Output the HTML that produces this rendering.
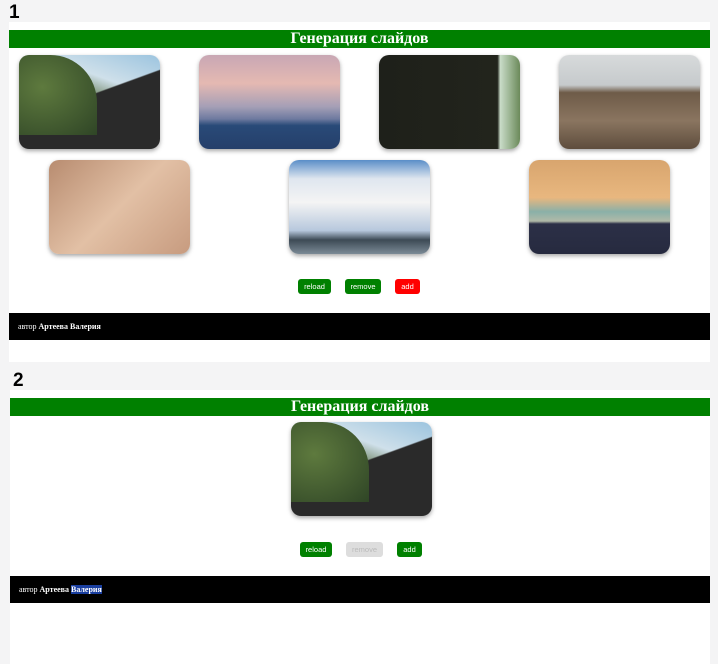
<!DOCTYPE html>
<html><head><meta charset="utf-8"><style>
*{margin:0;padding:0;box-sizing:border-box}
body{width:718px;height:664px;background:#f4f4f5;position:relative;overflow:hidden;font-family:"Liberation Sans",sans-serif}
.a{position:absolute}
.num{font-weight:bold;font-size:19px;color:#000}
.panel{background:#fff}
.hdr{background:#008000;color:#fff;font-family:"Liberation Serif",serif;font-weight:bold;font-size:16px;text-align:center;line-height:17px}
.img{border-radius:10px;box-shadow:0 2px 4px rgba(0,0,0,.35);overflow:hidden;width:141px;height:94px}
.btn{height:15px;border-radius:3px;color:#fff;font-size:7.5px;text-align:center;line-height:15px}
.g{background:#008000}.r{background:#f00}.d{background:#ddd;color:#bbb}
.ft{background:#000;color:#fff;font-family:"Liberation Serif",serif;font-size:8px;line-height:27px;padding-left:9px}
.i1{background:linear-gradient(160deg,transparent 45%,#2a2a2a 46%),linear-gradient(200deg,#9cc4df 0%,#cfe0ea 30%,#5a7046 50%,#2f3a2a 80%,#555 100%)}
.i1 b{position:absolute;left:0;top:0;width:55%;height:85%;background:radial-gradient(ellipse at 30% 40%,#5e7a3e,#2f4526);border-radius:0 60% 0 0}
.i2{background:linear-gradient(180deg,#c8a7b4 0%,#e5b9b2 30%,#a59fb6 55%,#6e7aa0 68%,#294a78 75%,#253f6a 100%)}
.i3{background:linear-gradient(90deg,#1e201a 0%,#22241c 84%,#c9dcc8 86%,#6b8a5a 100%)}
.i4{background:linear-gradient(180deg,#d7dadb 0%,#c6cacc 32%,#6e5b48 40%,#8a7560 70%,#5e4d3d 100%)}
.i5{background:linear-gradient(135deg,#b88c70,#e2c0a5 50%,#c79b7f)}
.i6{background:linear-gradient(180deg,#5a8ec8 0%,#dfe6ef 20%,#f4f4f4 45%,#b7c8dd 75%,#3d4a55 85%,#7b8a96 100%)}
.i7{background:linear-gradient(180deg,#d8a56e 0%,#e8b77f 40%,#8ab0a8 55%,#b0b9a8 65%,#2c3047 68%,#262a3f 100%)}
</style></head><body>
<div class="a num" style="left:9px;top:2px">1</div>
<div class="a panel" style="left:9px;top:22px;width:701px;height:340px"></div>
<div class="a hdr" style="left:9px;top:30px;width:701px;height:18px">Генерация слайдов</div>
<div class="a img i1" style="left:19px;top:55px"><b></b></div>
<div class="a img i2" style="left:199px;top:55px"></div>
<div class="a img i3" style="left:379px;top:55px"></div>
<div class="a img i4" style="left:559px;top:55px"></div>
<div class="a img i5" style="left:49px;top:160px"></div>
<div class="a img i6" style="left:289px;top:160px"></div>
<div class="a img i7" style="left:529px;top:160px"></div>
<div class="a btn g" style="left:298px;top:279px;width:33px">reload</div>
<div class="a btn g" style="left:345px;top:279px;width:36px">remove</div>
<div class="a btn r" style="left:395px;top:279px;width:25px">add</div>
<div class="a ft" style="left:9px;top:313px;width:701px;height:27px">автор <b>Артеева Валерия</b></div>

<div class="a num" style="left:13px;top:370px">2</div>
<div class="a panel" style="left:10px;top:390px;width:700px;height:274px"></div>
<div class="a hdr" style="left:10px;top:398px;width:700px;height:18px">Генерация слайдов</div>
<div class="a img i1" style="left:291px;top:422px"><b></b></div>
<div class="a btn g" style="left:300px;top:542px;width:32px">reload</div>
<div class="a btn d" style="left:346px;top:542px;width:37px">remove</div>
<div class="a btn g" style="left:397px;top:542px;width:25px">add</div>
<div class="a ft" style="left:10px;top:576px;width:700px;height:27px">автор <b>Артеева <span style="background:#1a3fa0">Валерия</span></b></div>
</body></html>
